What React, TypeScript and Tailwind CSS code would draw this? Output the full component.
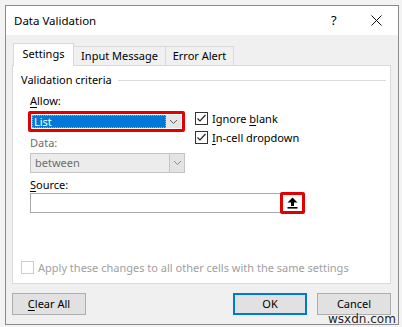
import React from 'react';

const font = { fontFamily: '"Noto Sans", "Liberation Sans", sans-serif' };

function Chevron({ color = '#606060' }: { color?: string }) {
  return (
    <svg width="9" height="6" viewBox="0 0 9 6">
      <path d="M1 1 L4.5 4.5 L8 1" fill="none" stroke={color} strokeWidth="1" />
    </svg>
  );
}

function Check({ label, u }: { label: string; u: number }) {
  return (
    <div className="flex items-center h-[13px]">
      <div className="w-[13px] h-[13px] border border-[#333] bg-white flex items-center justify-center">
        <svg width="11" height="11" viewBox="0 0 11 11">
          <path d="M1.5 5.5 L4 8 L9.5 2" fill="none" stroke="#222" strokeWidth="1.2" />
        </svg>
      </div>
      <span className="ml-[4px] text-[11px] leading-[14px] text-black">
        {label.slice(0, u)}
        <span className="underline underline-offset-2">{label[u]}</span>
        {label.slice(u + 1)}
      </span>
    </div>
  );
}

export default function App() {
  return (
    <div className="relative min-h-[327px] bg-[#f3f3f3] pt-[5px] pl-[5px]" style={font}>
      <div className="w-[394px] h-[320px] border border-[#8a8a8a] bg-[#f0f0f0] flex flex-col">
        {/* title bar */}
        <div className="h-[29px] bg-white flex items-center pl-[8px] text-[11.5px] text-black">
          <span className="flex-1">Data Validation</span>
          <span className="w-[10px] text-[13px]">?</span>
          <svg className="ml-[30px] mr-[16px]" width="11" height="11" viewBox="0 0 11 11">
            <path d="M0.5 0.5 L10.5 10.5 M10.5 0.5 L0.5 10.5" stroke="#111" strokeWidth="1" />
          </svg>
        </div>

        <div className="flex-1 pl-[6px] pr-[7px] pt-[8px]">
          {/* tabs */}
          <div className="flex items-end h-[22px] text-[11px] text-black">
            <div className="relative z-10 ml-[1px] w-[61px] h-[23px] -mb-px bg-white border-x border-t border-[#d9d9d9] flex items-center justify-center pb-[2px]">
              Settings
            </div>
            <div className="w-[92px] h-[19px] border-t border-r border-[#d9d9d9] flex items-center justify-center">
              Input Message
            </div>
            <div className="w-[68px] h-[19px] border-t border-r border-[#d9d9d9] flex items-center justify-center">
              Error Alert
            </div>
          </div>

          {/* panel */}
          <div className="h-[219px] border border-[#d9d9d9] bg-white text-[11px] text-black">
            <div className="mt-[7px] pl-[8px] pr-[4px] flex items-center h-[14px] leading-[14px]">
              <span>Validation criteria</span>
              <div className="flex-1 ml-[6px] h-px bg-[#dcdcdc]" />
            </div>

            <div className="mt-[7px] pl-[17px] h-[14px] leading-[14px]">
              <span className="underline underline-offset-2">A</span>llow:
            </div>

            <div className="mt-[3px] pl-[15px] flex items-start">
              <div className="w-[157px]">
                <div className="h-[21px] border-[3px] border-[#e00000] rounded-[2px] flex bg-white p-px">
                  <div className="flex-1 bg-[#0078d7] text-white pl-[2px] flex items-center leading-[13px] outline-1 outline-dotted outline-[#7fb4e6] -outline-offset-1">
                    List
                  </div>
                  <div className="w-[15px] bg-[#e5e5e5] flex items-center justify-center">
                    <Chevron />
                  </div>
                </div>
                <div className="mt-[4px] pl-[2px] h-[14px] leading-[14px] text-[#6d6d6d]">Data:</div>
                <div className="mt-[3px] ml-[2px] w-[155px] h-[20px] border border-[#c4c4c4] bg-[#ececec] flex">
                  <div className="flex-1 pl-[4px] flex items-center text-[#6d6d6d]">between</div>
                  <div className="w-[15px] border-l border-[#c4c4c4] bg-[#e3e3e3] flex items-center justify-center">
                    <Chevron color="#8a8a8a" />
                  </div>
                </div>
              </div>
              <div className="ml-[10px] mt-[1px] flex flex-col gap-[6px]">
                <Check label="Ignore blank" u={7} />
                <Check label="In-cell dropdown" u={0} />
              </div>
            </div>

            <div className="mt-[5px] pl-[17px] h-[14px] leading-[14px]">
              <span className="underline underline-offset-2">S</span>ource:
            </div>

            <div className="pl-[17px] flex items-center h-[22px]">
              <div className="w-[251px] h-[20px] border border-[#a8a8a8] bg-white" />
              <div className="-ml-px w-[25px] h-[22px] border-[3px] border-[#e00000] rounded-[2px] bg-white flex items-center justify-center">
                <svg width="11" height="12" viewBox="0 0 11 12">
                  <path d="M5.5 0.5 L10.5 5.5 L7 5.5 L7 9 L4 9 L4 5.5 L0.5 5.5 Z" fill="#000" />
                  <rect x="0.5" y="10" width="10" height="1.6" fill="#000" />
                </svg>
              </div>
            </div>

            <div className="mt-[47px] pl-[8px] flex items-center h-[13px]">
              <div className="w-[13px] h-[13px] border border-[#cccccc] bg-white" />
              <span className="ml-[4px] text-[#a0a0a0] leading-[14px]">
                Apply these changes to all other cells with the same settings
              </span>
            </div>
          </div>

          {/* buttons */}
          <div className="mt-[9px] flex text-[11px] text-black">
            <button className="w-[74px] h-[22px] border border-[#adadad] bg-[#e1e1e1]">
              <span className="underline underline-offset-2">C</span>lear All
            </button>
            <div className="flex-1" />
            <button className="w-[74px] h-[22px] border-2 border-[#0078d7] bg-[#e1e1e1]">OK</button>
            <button className="ml-[10px] w-[74px] h-[22px] border border-[#adadad] bg-[#e1e1e1]">Cancel</button>
          </div>
        </div>
      </div>

      <div className="absolute left-[328px] top-[312px] text-[12px] leading-[14px] text-[#222] [text-shadow:0_0_2px_#fff]" style={{ fontFamily: '"DejaVu Sans", sans-serif' }}>
        wsxdn.com
      </div>
    </div>
  );
}
